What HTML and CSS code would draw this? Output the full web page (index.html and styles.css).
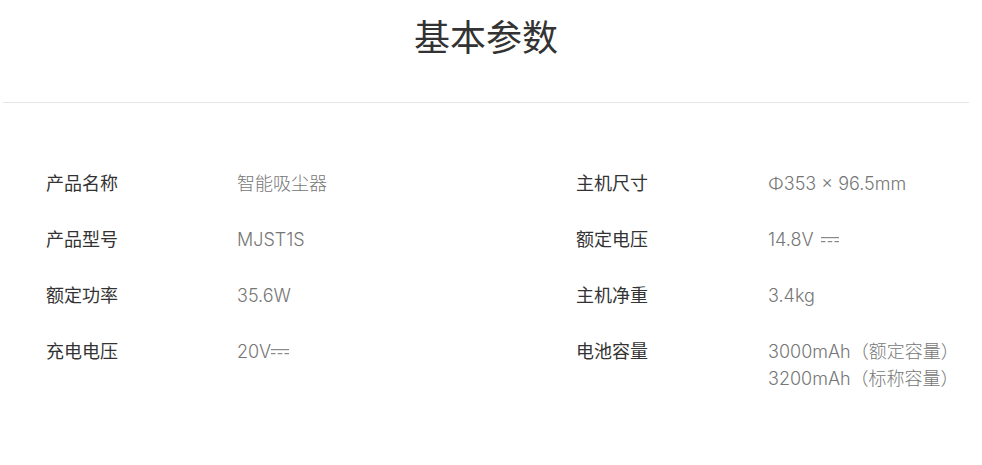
FILE: index.html
```html
<!DOCTYPE html>
<html lang="zh-CN">
<head>
<meta charset="utf-8">
<title>基本参数</title>
<link rel="stylesheet" href="styles.css">
</head>
<body>
<div class="page">
  <h2 class="title">基本参数</h2>
  <div class="divider"></div>
  <div class="specs">
    <div class="label">产品名称</div>
    <div class="value">智能吸尘器</div>
    <div class="label">主机尺寸</div>
    <div class="value">Φ353 × 96.5mm</div>

    <div class="label">产品型号</div>
    <div class="value">MJST1S</div>
    <div class="label">额定电压</div>
    <div class="value">14.8V <svg class="dc dc-gap" viewBox="0 0 18 8" width="18" height="8"><rect x="0" y="1" width="18" height="1.2" fill="currentColor"/><rect x="0" y="5" width="4.5" height="1.2" fill="currentColor"/><rect x="6.75" y="5" width="4.5" height="1.2" fill="currentColor"/><rect x="13.5" y="5" width="4.5" height="1.2" fill="currentColor"/></svg></div>

    <div class="label">额定功率</div>
    <div class="value">35.6W</div>
    <div class="label">主机净重</div>
    <div class="value">3.4kg</div>

    <div class="label">充电电压</div>
    <div class="value">20V<svg class="dc" viewBox="0 0 18 8" width="18" height="8"><rect x="0" y="1" width="18" height="1.2" fill="currentColor"/><rect x="0" y="5" width="4.5" height="1.2" fill="currentColor"/><rect x="6.75" y="5" width="4.5" height="1.2" fill="currentColor"/><rect x="13.5" y="5" width="4.5" height="1.2" fill="currentColor"/></svg></div>
    <div class="label">电池容量</div>
    <div class="value">3000mAh（额定容量）<br>3200mAh（标称容量）</div>
  </div>
</div>
</body>
</html>
```

FILE: styles.css
```css
html, body {
  margin: 0;
  padding: 0;
  background: #ffffff;
}

body {
  font-family: "Inter", "Noto Sans CJK SC", sans-serif;
  color: #333333;
}

.page {
  width: 966px;
  margin-left: 3px;
}

.title {
  margin: 0;
  padding-top: 10px;
  height: 50px;
  line-height: 50px;
  font-size: 36px;
  font-weight: normal;
  text-align: center;
  color: #333333;
  font-family: "Noto Sans CJK SC", sans-serif;
}

.divider {
  margin-top: 42px;
  height: 1px;
  background: #e6e6e6;
}

.specs {
  display: grid;
  grid-template-columns: 191px 339px 192px 1fr;
  row-gap: 29px;
  padding-left: 43px;
  padding-top: 67px;
  font-size: 18px;
  line-height: 27px;
}

.label {
  color: #333333;
}

.value {
  color: #767676;
  font-weight: 300;
}

.dc {
  vertical-align: 2px;
  color: #888888;
}

.dc-gap {
  margin-left: 2px;
}
```
